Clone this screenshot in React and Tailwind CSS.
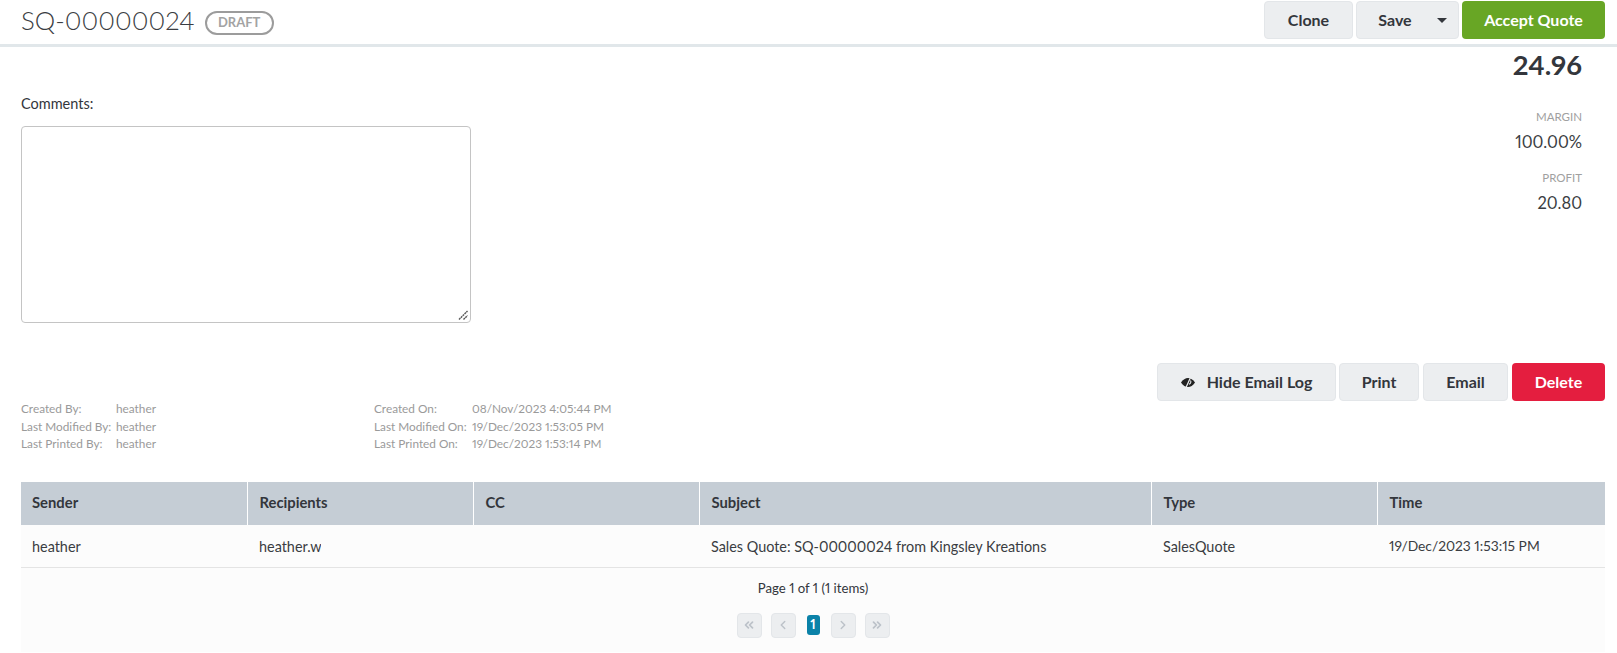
import React from "react";
import { ChevronsLeft, ChevronLeft, ChevronRight, ChevronsRight } from "lucide-react";

const font = "font-['Lato','Liberation_Sans',sans-serif]";

function Btn({ children, className = "" }) {
  return (
    <button className={`flex h-[38px] items-center justify-center rounded-[4px] border border-[#e3e6e9] bg-[#eceef0] text-[16px] font-bold text-[#33363c] ${className}`}>
      {children}
    </button>
  );
}

function ColorBtn({ children, className = "" }) {
  return (
    <button className={`flex h-[38px] items-center justify-center rounded-[4px] text-[16px] font-bold text-white ${className}`}>
      {children}
    </button>
  );
}

function Meta({ rows, labelW }) {
  return (
    <div className="flex flex-col gap-[3.5px] text-[11.8px] leading-[14px] text-[#9a9a9a]">
      {rows.map(([a, b]) => (
        <div key={a} className="flex">
          <span style={{ width: labelW }}>{a}</span>
          <span>{b}</span>
        </div>
      ))}
    </div>
  );
}

function PageBtn({ children }) {
  return (
    <span className="flex h-[25px] w-[25px] items-center justify-center rounded-[4px] border border-[#e3e6e9] bg-[#eceef0] text-[#bcc2c9]">
      {children}
    </span>
  );
}

function EyeOff() {
  return (
    <svg width="14" height="11" viewBox="0 0 14 11" className="shrink-0">
      <path d="M0 5.500C2 2.500 4.500 1 7 1s5 1.500 7 4.500C12 8.500 9.500 10 7 10S2 8.500 0 5.500Z" fill="#222" />
      <path d="M9.500 0.500 5 10.500" stroke="#eceef0" strokeWidth="1.200" />
      <path d="M9.500 3.500C10.300 4.800 9.800 6.500 8 7.300" stroke="#eceef0" strokeWidth="1.100" fill="none" />
    </svg>
  );
}

const cols = [
  ["Sender", "w-[226px] pl-[11px]"],
  ["Recipients", "w-[226px] pl-[12px]"],
  ["CC", "w-[226px] pl-[12px]"],
  ["Subject", "w-[452px] pl-[12px]"],
  ["Type", "w-[226px] pl-[12px]"],
  ["Time", "w-[228px] pl-[12px]"],
];

export default function App() {
  return (
    <div className={`${font} h-[653px] w-[1617px] overflow-hidden bg-white text-[#33363c] proportional-nums`}>
      <header className="flex h-[47px] items-start justify-between border-b-[3px] border-[#e1e7ea] pl-[21px] pr-[12px]">
        <div className="flex h-[44px] items-center pb-[2px]">
          <h1 className="text-[25.8px] font-light leading-none text-[#3a3d42]">SQ-00000024</h1>
          <span className="ml-[10px] mt-[4px] flex h-[24px] w-[69px] items-center justify-center rounded-full border-2 border-[#9c9c9c] text-[13px] font-bold text-[#a3a3a3]">
            DRAFT
          </span>
        </div>
        <div className="mt-px flex gap-[3px]">
          <Btn className="w-[89px]">Clone</Btn>
          <Btn className="w-[103px] pl-[10px]">
            <span>Save</span>
            <span className="ml-[25px] h-0 w-0 border-x-[5px] border-t-[5px] border-x-transparent border-t-[#33363c]" />
          </Btn>
          <ColorBtn className="w-[143px] bg-[#68a625]">Accept Quote</ColorBtn>
        </div>
      </header>

      <main className="pl-[21px] pr-[12px]">
        <div className="flex items-start justify-between">
          <div className="w-[450px]">
            <div className="mt-[49px] text-[14.5px] leading-[16px]">Comments:</div>
            <div className="relative mt-[14px] h-[197px] w-[450px] rounded-[4px] border border-[#c4c4c4] bg-white">
              <svg className="absolute bottom-px right-px" width="12" height="12" viewBox="0 0 12 12">
                <path d="M2 10.500 10.500 2M6.500 10.500 10.500 6.500" stroke="#555" strokeWidth="1.400" strokeDasharray="2 0.600" fill="none" />
              </svg>
            </div>
          </div>
          <div className="pr-[23px] text-right">
            <div className="mt-[4px] text-[27.5px] font-bold leading-[28px] text-[#33363c]">24.96</div>
            <div className="mt-[31px] text-[11.5px] leading-[14px] text-[#a0a0a0]">MARGIN</div>
            <div className="mt-[8px] text-[16.5px] font-normal leading-[20px] text-[#3a3d42]">100.00%</div>
            <div className="mt-[19px] text-[11.5px] leading-[14px] text-[#a0a0a0]">PROFIT</div>
            <div className="mt-[8px] text-[16.5px] font-normal leading-[20px] text-[#3a3d42]">20.80</div>
          </div>
        </div>

        <div className="mt-[40px] flex items-start justify-between">
          <div className="mt-[39px] flex">
            <div className="w-[353px]">
              <Meta labelW="95px" rows={[["Created By:", "heather"], ["Last Modified By:", "heather"], ["Last Printed By:", "heather"]]} />
            </div>
            <Meta labelW="98px" rows={[["Created On:", "08/Nov/2023 4:05:44 PM"], ["Last Modified On:", "19/Dec/2023 1:53:05 PM"], ["Last Printed On:", "19/Dec/2023 1:53:14 PM"]]} />
          </div>
          <div className="flex">
            <Btn className="w-[179px] gap-[12px]">
              <EyeOff />
              <span>Hide Email Log</span>
            </Btn>
            <Btn className="ml-[3px] w-[80px]">Print</Btn>
            <Btn className="ml-[4px] w-[85px]">Email</Btn>
            <ColorBtn className="ml-[4px] w-[93px] bg-[#e41e3f]">Delete</ColorBtn>
          </div>
        </div>

        <table className="mt-[31px] w-[1584px] table-fixed border-collapse text-[14.4px]">
          <thead>
            <tr className="h-[43px] bg-[#c5cdd5] text-left text-[#33363c]">
              {cols.map(([c, w]) => (
                <th key={c} className={`${w} border-r border-white pb-[2px] text-[14.8px] font-bold last:border-r-0`}>{c}</th>
              ))}
            </tr>
          </thead>
          <tbody>
            <tr className="h-[42px] border-b border-[#e4e4e4] bg-[#fcfcfc] text-[#3a3d42]">
              <td className="pl-[11px] pt-[2px]">heather</td>
              <td className="pl-[12px] pt-[2px]">
                <div className="w-[62px] overflow-hidden whitespace-nowrap">heather.w</div>
              </td>
              <td className="pl-[12px] pt-[2px]" />
              <td className="pl-[12px] pt-[2px]">Sales Quote: SQ-00000024 from Kingsley Kreations</td>
              <td className="pl-[12px] pt-[2px]">SalesQuote</td>
              <td className="pl-[12px] pt-[2px] text-[13.8px]">19/Dec/2023 1:53:15 PM</td>
            </tr>
          </tbody>
        </table>

        <div className="flex h-[84px] w-[1584px] flex-col items-center bg-[#fcfcfc]">
          <div className="mt-[12px] text-[13.2px] leading-[16px] text-[#33363c]">Page 1 of 1 (1 items)</div>
          <div className="mt-[17px] flex items-center">
            <PageBtn><ChevronsLeft size={14} strokeWidth={3} /></PageBtn>
            <span className="w-[9px]" />
            <PageBtn><ChevronLeft size={14} strokeWidth={2.500} /></PageBtn>
            <span className="mx-[11px] flex h-[20px] w-[13px] items-center justify-center rounded-[3px] bg-[#0b82a8] text-[13px] font-bold text-white">1</span>
            <PageBtn><ChevronRight size={14} strokeWidth={2.500} /></PageBtn>
            <span className="w-[9px]" />
            <PageBtn><ChevronsRight size={14} strokeWidth={3} /></PageBtn>
          </div>
        </div>
      </main>
    </div>
  );
}
